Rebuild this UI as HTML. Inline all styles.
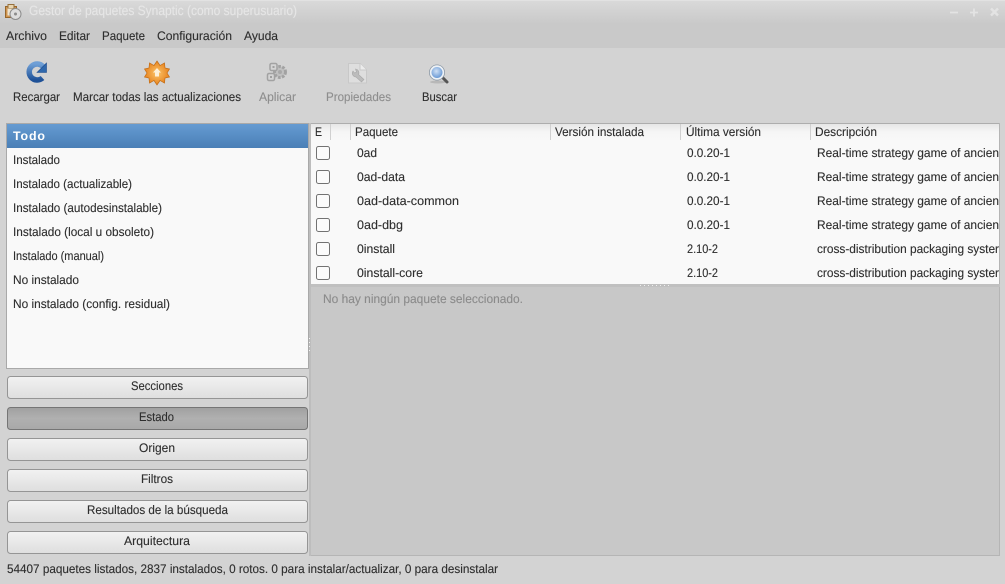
<!DOCTYPE html>
<html lang="es"><head><meta charset="utf-8"><title>Gestor de paquetes Synaptic</title>
<style>
html,body{margin:0;padding:0;background:#d3d3d3;width:1005px;height:584px;overflow:hidden}
svg{display:block}
text{font-family:"Liberation Sans",sans-serif;font-size:12.4px;fill:#2e2e2e;stroke:#2e2e2e;stroke-width:.12px;text-rendering:geometricPrecision}
.g{fill:#8e8e8e;stroke:#8e8e8e}
</style></head><body>
<svg width="1005" height="584" viewBox="0 0 1005 584" xmlns="http://www.w3.org/2000/svg">
<defs>
<linearGradient id="tb" x1="0" y1="0" x2="0" y2="1"><stop offset="0" stop-color="#dadada"/><stop offset="1" stop-color="#c9c9c9"/></linearGradient>
<linearGradient id="sel" x1="0" y1="0" x2="0" y2="1"><stop offset="0" stop-color="#659bd2"/><stop offset="1" stop-color="#4a7fb6"/></linearGradient>
<linearGradient id="btn" x1="0" y1="0" x2="0" y2="1"><stop offset="0" stop-color="#f2f2f2"/><stop offset="1" stop-color="#dedede"/></linearGradient>
<linearGradient id="act" x1="0" y1="0" x2="0" y2="1"><stop offset="0" stop-color="#a0a0a0"/><stop offset="0.5" stop-color="#b0b0b0"/><stop offset="1" stop-color="#a8a8a8"/></linearGradient>
<linearGradient id="hd" x1="0" y1="0" x2="0" y2="1"><stop offset="0" stop-color="#e6e6e6"/><stop offset="0.5" stop-color="#f6f6f6"/><stop offset="1" stop-color="#f8f8f8"/></linearGradient>
<radialGradient id="lens" cx="0.45" cy="0.4" r="0.6"><stop offset="0" stop-color="#cfe0f5"/><stop offset="1" stop-color="#5b8fd0"/></radialGradient>
<linearGradient id="rel" x1="0" y1="0" x2="0" y2="1"><stop offset="0" stop-color="#6f9fd6"/><stop offset="1" stop-color="#1f5197"/></linearGradient>
<radialGradient id="star" cx="0.5" cy="0.5" r="0.55"><stop offset="0" stop-color="#fbc56a"/><stop offset="1" stop-color="#e57c17"/></radialGradient>
</defs>

<!-- backgrounds -->
<rect width="1005" height="584" fill="#d3d3d3"/>
<rect width="1005" height="24" fill="url(#tb)"/>
<rect y="0" width="1005" height="1" fill="#e2e2e2"/>
<rect y="24" width="1005" height="24" fill="#c9c9c9"/>

<!-- titlebar -->
<g>
<rect x="5.500" y="6.500" width="11" height="11" fill="#cf9550" stroke="#96662c" stroke-width="1"/>
<rect x="8" y="4.500" width="6" height="4" fill="#e8d5b0" stroke="#96703c" stroke-width="1"/>
<rect x="7.500" y="8.500" width="7" height="7" fill="#efe4cf"/>
<circle cx="15.500" cy="14" r="5.500" fill="#dedede" stroke="#8c8c8c" stroke-width="1"/>
<circle cx="15.500" cy="14" r="1.500" fill="#8c8c8c"/>
</g>
<text x="29" y="15" textLength="268" lengthAdjust="spacingAndGlyphs" style="fill:#e6e6e6;stroke:#e6e6e6;font-size:13.4px">Gestor de paquetes Synaptic  (como superusuario)</text>
<g stroke="#e8e8e8" stroke-width="1.800" fill="none" opacity="0.8">
<path d="M950 12.500H958"/><path d="M970 12.500H978M974 8.500V16.500"/><path d="M991 8.500L998 15.500M998 8.500L991 15.500" stroke-width="2.400"/>
</g>

<!-- menu -->
<text x="6" y="40" textLength="41" lengthAdjust="spacingAndGlyphs">Archivo</text>
<text x="59" y="40" textLength="31" lengthAdjust="spacingAndGlyphs">Editar</text>
<text x="102" y="40" textLength="43" lengthAdjust="spacingAndGlyphs">Paquete</text>
<text x="157" y="40" textLength="75" lengthAdjust="spacingAndGlyphs">Configuración</text>
<text x="244" y="40" textLength="34" lengthAdjust="spacingAndGlyphs">Ayuda</text>

<!-- toolbar icons -->
<path d="M43 66.500 A8 8 0 1 0 42.500 78" fill="none" stroke="url(#rel)" stroke-width="5.500"/>
<path d="M46.500 63 V72.500 H37 Z" fill="#2f68ad" stroke="#1d4a8c" stroke-width="0.600"/>
<g>
<path d="M157 61 L160 65.500 L164.500 63 L165 68 L169.500 69 L167 73 L169.500 77 L165 78 L164.500 83 L160 80.500 L157 85 L154 80.500 L149.500 83 L149 78 L144.500 77 L147 73 L144.500 69 L149 68 L149.500 63 L154 65.500 Z" fill="url(#star)" stroke="#c26c15" stroke-width="0.700"/>
<path d="M157 68 L161 72.500 H159 V76.500 H155 V72.500 H153 Z" fill="#fdf0d8"/>
</g>
<g fill="#d4d4d4" stroke="#a2a2a2" stroke-width="1.500">
<circle cx="280" cy="72" r="5.500" stroke-dasharray="2.600 1.400" stroke-width="3" fill="#c0c0c0"/>
<circle cx="280" cy="72" r="2" fill="#a8a8a8" stroke="none"/>
<rect x="270" y="63.500" width="7" height="7" rx="1.500"/>
<rect x="267.500" y="73.500" width="7" height="7" rx="1.500"/>
<rect x="272.500" y="66" width="2" height="2" fill="#a0a0a0" stroke="none"/>
<rect x="270" y="76" width="2" height="2" fill="#a0a0a0" stroke="none"/>
</g>
<g>
<path d="M348.500 63.500H360L366.500 70V83H348.500Z" fill="#dedede" stroke="#c8c8c8"/>
<path d="M360 63.500V70H366.500" fill="#ececec" stroke="#c8c8c8"/>
<path d="M353 71 A3.800 3.800 0 0 0 356 77 L361.500 82 L364 79.500 L358.500 74.500 A3.800 3.800 0 0 0 355.500 69 L356.500 72 L354.500 73 Z" fill="#bcbcbc" stroke="#a8a8a8" stroke-width="0.600"/>
</g>
<g>
<ellipse cx="438" cy="82" rx="8" ry="1.500" fill="#b8b8b8"/>
<path d="M442 77 L447 82" stroke="#555" stroke-width="3" stroke-linecap="round"/>
<circle cx="437" cy="72.500" r="6.500" fill="url(#lens)" stroke="#eef2f6" stroke-width="2"/>
<circle cx="437" cy="72.500" r="7.600" fill="none" stroke="#8d99a6" stroke-width="0.800"/>
</g>

<!-- toolbar labels -->
<text x="13" y="101" textLength="47" lengthAdjust="spacingAndGlyphs">Recargar</text>
<text x="73" y="101" textLength="168" lengthAdjust="spacingAndGlyphs">Marcar todas las actualizaciones</text>
<text class="g" x="259" y="101" textLength="37" lengthAdjust="spacingAndGlyphs">Aplicar</text>
<text class="g" x="326" y="101" textLength="65" lengthAdjust="spacingAndGlyphs">Propiedades</text>
<text x="422" y="101" textLength="35" lengthAdjust="spacingAndGlyphs">Buscar</text>

<!-- left list -->
<rect x="6.500" y="123.500" width="302" height="245" fill="#f9f9f9" stroke="#a9a9a9"/>
<rect x="7" y="124" width="301" height="24" fill="url(#sel)"/>
<text x="13" y="140" textLength="32" lengthAdjust="spacing" style="fill:#fff;stroke:none;font-weight:bold">Todo</text>
<text x="13" y="164" textLength="47" lengthAdjust="spacingAndGlyphs">Instalado</text>
<text x="13" y="188" textLength="119" lengthAdjust="spacingAndGlyphs">Instalado (actualizable)</text>
<text x="13" y="212" textLength="149" lengthAdjust="spacingAndGlyphs">Instalado (autodesinstalable)</text>
<text x="13" y="236" textLength="141" lengthAdjust="spacingAndGlyphs">Instalado (local u obsoleto)</text>
<text x="13" y="260" textLength="91" lengthAdjust="spacingAndGlyphs">Instalado (manual)</text>
<text x="13" y="284" textLength="66" lengthAdjust="spacingAndGlyphs">No instalado</text>
<text x="13" y="308" textLength="157" lengthAdjust="spacingAndGlyphs">No instalado (config. residual)</text>

<!-- pane separator -->
<rect x="309" y="123" width="2" height="433" fill="#bdbdbd"/>
<g fill="#f4f4f4"><rect x="309" y="338" width="1" height="1"/><rect x="309" y="342" width="1" height="1"/><rect x="309" y="346" width="1" height="1"/><rect x="309" y="350" width="1" height="1"/></g>

<!-- left buttons -->
<g stroke="#959595" fill="url(#btn)">
<rect x="7.500" y="376.500" width="300" height="22" rx="3"/>
<rect x="7.500" y="407.500" width="300" height="22" rx="3" fill="url(#act)" stroke="#757575"/>
<rect x="7.500" y="438.500" width="300" height="22" rx="3"/>
<rect x="7.500" y="469.500" width="300" height="22" rx="3"/>
<rect x="7.500" y="500.500" width="300" height="22" rx="3"/>
<rect x="7.500" y="531.500" width="300" height="22" rx="3"/>
</g>
<text x="131" y="390" textLength="52" lengthAdjust="spacingAndGlyphs">Secciones</text>
<text x="139" y="421" textLength="35" lengthAdjust="spacingAndGlyphs">Estado</text>
<text x="139" y="452" textLength="36" lengthAdjust="spacingAndGlyphs">Origen</text>
<text x="141" y="483" textLength="32" lengthAdjust="spacingAndGlyphs">Filtros</text>
<text x="87" y="514" textLength="141" lengthAdjust="spacingAndGlyphs">Resultados de la búsqueda</text>
<text x="124" y="545" textLength="66" lengthAdjust="spacingAndGlyphs">Arquitectura</text>

<!-- table -->
<rect x="311" y="123" width="689" height="164" fill="#f9f9f9"/>
<rect x="311" y="123" width="689" height="1" fill="#adadad"/>
<rect x="311" y="124" width="689" height="16" fill="url(#hd)"/>
<rect x="999" y="123" width="1" height="164" fill="#b5b5b5"/>
<g fill="#d0d0d0">
<rect x="330" y="124" width="1" height="16"/><rect x="350" y="124" width="1" height="16"/><rect x="550" y="124" width="1" height="16"/><rect x="680" y="124" width="1" height="16"/><rect x="810" y="124" width="1" height="16"/>
</g>
<text x="315" y="136" textLength="7" lengthAdjust="spacingAndGlyphs">E</text>
<text x="355" y="136" textLength="43" lengthAdjust="spacingAndGlyphs">Paquete</text>
<text x="555" y="136" textLength="89" lengthAdjust="spacingAndGlyphs">Versión instalada</text>
<text x="686" y="136" textLength="75" lengthAdjust="spacingAndGlyphs">Última versión</text>
<text x="815" y="136" textLength="62" lengthAdjust="spacingAndGlyphs">Descripción</text>

<g fill="#fbfbfb" stroke="#727272">
<rect x="316.500" y="146.500" width="13" height="13" rx="2"/>
<rect x="316.500" y="170.500" width="13" height="13" rx="2"/>
<rect x="316.500" y="194.500" width="13" height="13" rx="2"/>
<rect x="316.500" y="218.500" width="13" height="13" rx="2"/>
<rect x="316.500" y="242.500" width="13" height="13" rx="2"/>
<rect x="316.500" y="266.500" width="13" height="13" rx="2"/>
</g>
<text x="357" y="157" textLength="20" lengthAdjust="spacingAndGlyphs">0ad</text>
<text x="357" y="181" textLength="48" lengthAdjust="spacingAndGlyphs">0ad-data</text>
<text x="357" y="205" textLength="102" lengthAdjust="spacingAndGlyphs">0ad-data-common</text>
<text x="357" y="229" textLength="46" lengthAdjust="spacingAndGlyphs">0ad-dbg</text>
<text x="357" y="253" textLength="38" lengthAdjust="spacingAndGlyphs">0install</text>
<text x="357" y="277" textLength="66" lengthAdjust="spacingAndGlyphs">0install-core</text>
<text x="687" y="157" textLength="43" lengthAdjust="spacingAndGlyphs">0.0.20-1</text>
<text x="687" y="181" textLength="43" lengthAdjust="spacingAndGlyphs">0.0.20-1</text>
<text x="687" y="205" textLength="43" lengthAdjust="spacingAndGlyphs">0.0.20-1</text>
<text x="687" y="229" textLength="43" lengthAdjust="spacingAndGlyphs">0.0.20-1</text>
<text x="687" y="253" textLength="31" lengthAdjust="spacingAndGlyphs">2.10-2</text>
<text x="687" y="277" textLength="31" lengthAdjust="spacingAndGlyphs">2.10-2</text>
<text x="817" y="157" textLength="182" lengthAdjust="spacingAndGlyphs">Real-time strategy game of ancien</text>
<text x="817" y="181" textLength="182" lengthAdjust="spacingAndGlyphs">Real-time strategy game of ancien</text>
<text x="817" y="205" textLength="182" lengthAdjust="spacingAndGlyphs">Real-time strategy game of ancien</text>
<text x="817" y="229" textLength="182" lengthAdjust="spacingAndGlyphs">Real-time strategy game of ancien</text>
<text x="817" y="253" textLength="182" lengthAdjust="spacingAndGlyphs">cross-distribution packaging syster</text>
<text x="817" y="277" textLength="182" lengthAdjust="spacingAndGlyphs">cross-distribution packaging syster</text>

<!-- details -->
<rect x="311" y="284" width="689" height="3" fill="#c0c0c0"/>
<g fill="#f0f0f0"><rect x="640" y="285" width="1" height="1"/><rect x="644" y="285" width="1" height="1"/><rect x="648" y="285" width="1" height="1"/><rect x="652" y="285" width="1" height="1"/><rect x="656" y="285" width="1" height="1"/><rect x="660" y="285" width="1" height="1"/><rect x="664" y="285" width="1" height="1"/><rect x="668" y="285" width="1" height="1"/></g>
<rect x="311" y="287" width="689" height="268" fill="#c8c8c8"/>
<rect x="311" y="555" width="689" height="1" fill="#b5b5b5"/>
<rect x="999" y="287" width="1" height="269" fill="#b5b5b5"/>
<text x="323" y="303" textLength="200" lengthAdjust="spacingAndGlyphs" style="fill:#8b8b8b;stroke:#8b8b8b">No hay ningún paquete seleccionado.</text>

<!-- status -->
<text x="7" y="573" textLength="491" lengthAdjust="spacingAndGlyphs">54407 paquetes listados, 2837 instalados, 0 rotos. 0 para instalar/actualizar, 0 para desinstalar</text>
</svg>
</body></html>
